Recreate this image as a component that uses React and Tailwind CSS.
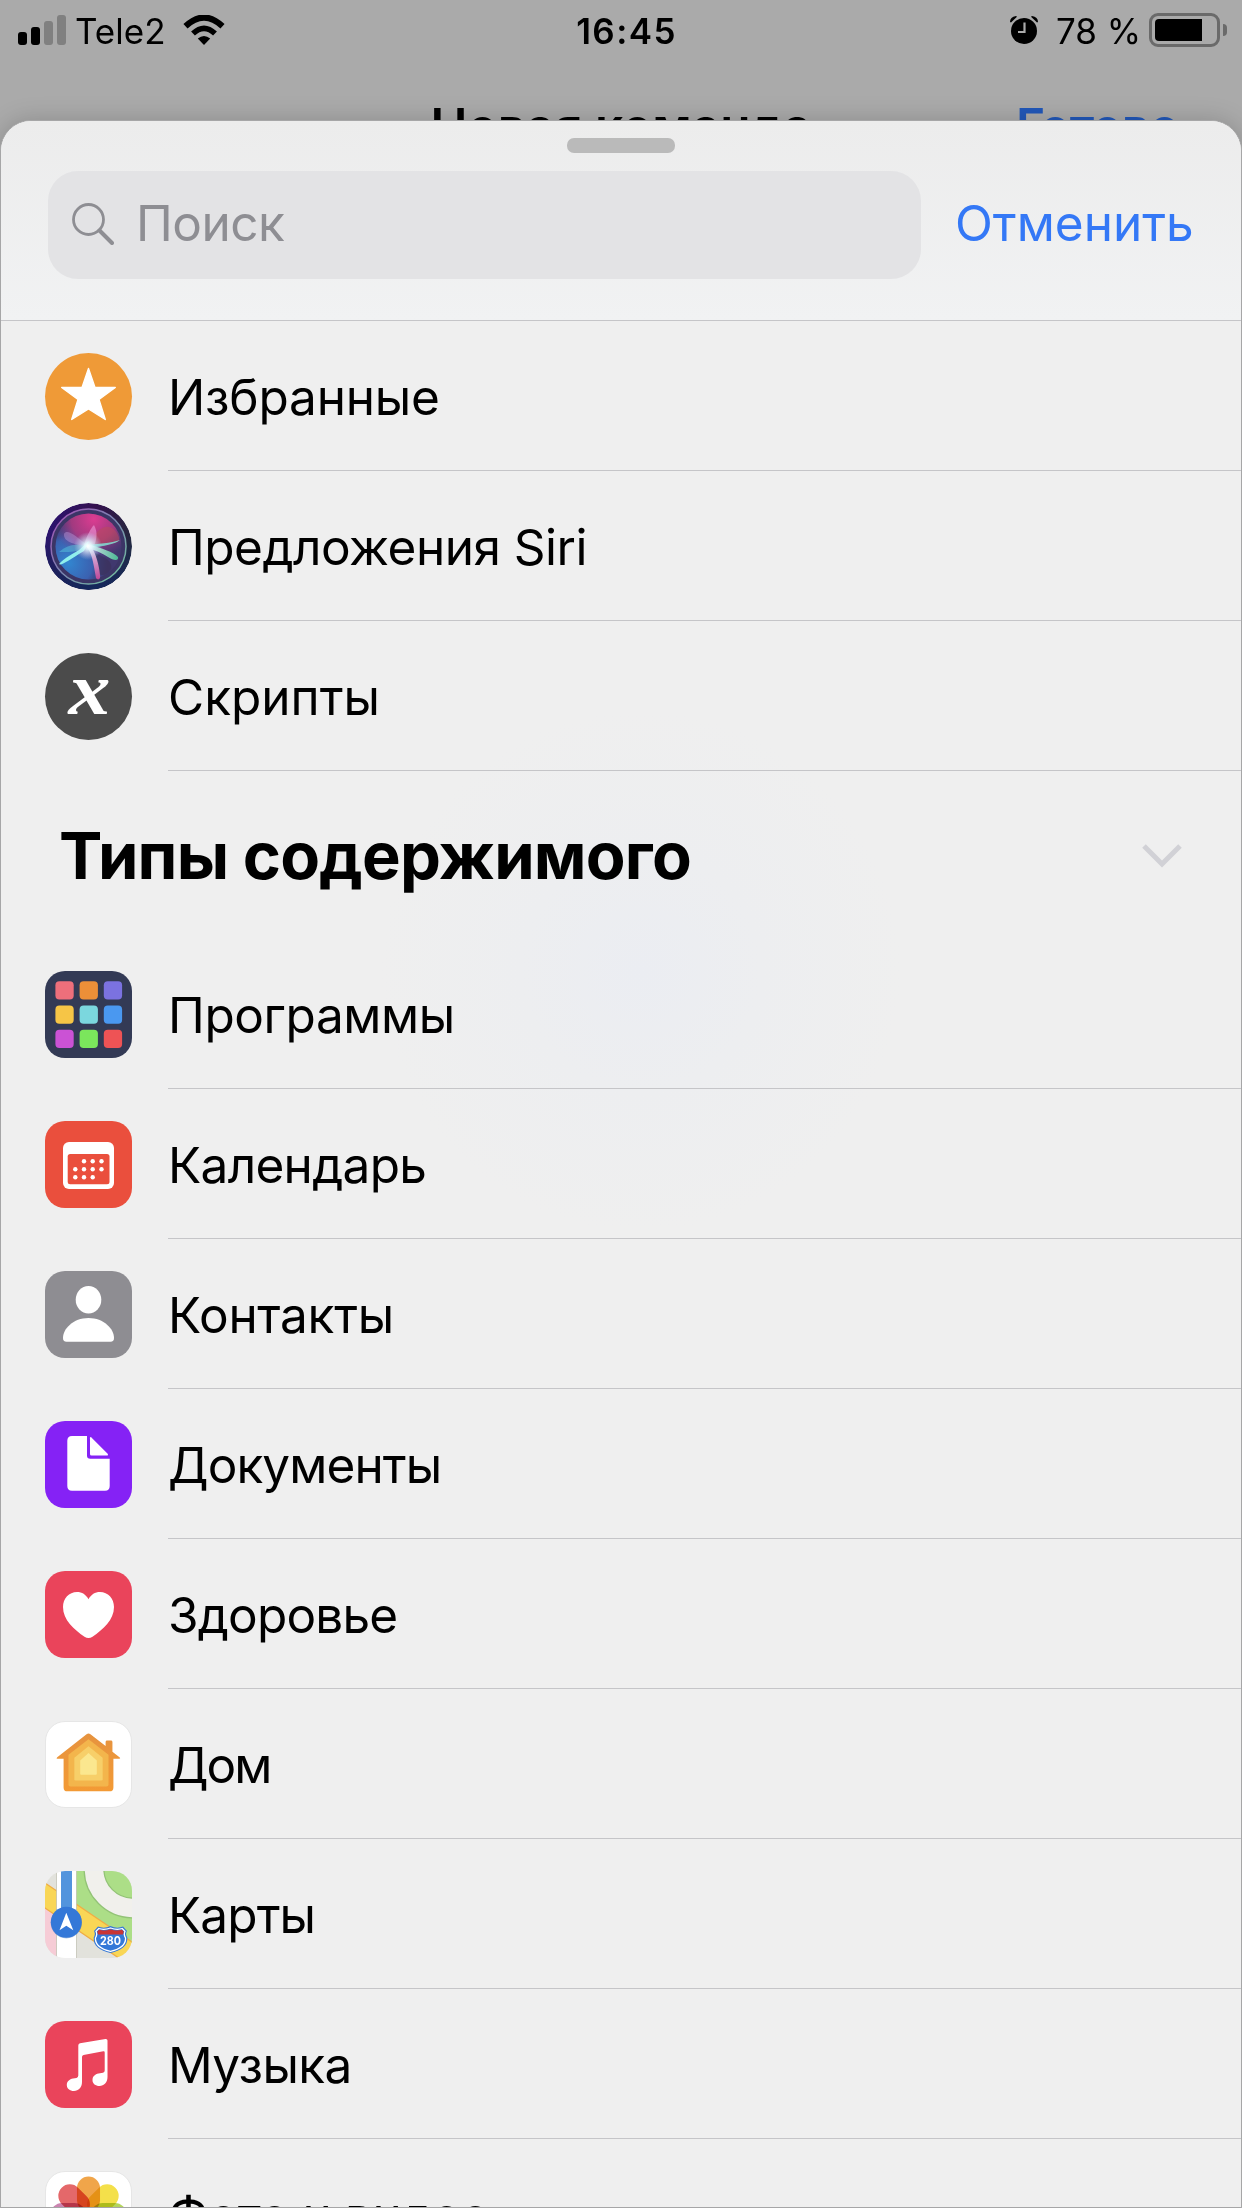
import React from "react";

const PETALS = [
    { angle: 0, color: "#f0a54a" },
    { angle: 45, color: "#f4e04a" },
    { angle: 90, color: "#b4d55c" },
    { angle: 135, color: "#6fc0a0" },
    { angle: 180, color: "#7fb4dd" },
    { angle: 225, color: "#9b96cc" },
    { angle: 270, color: "#cb84b0" },
    { angle: 315, color: "#e4686a" }
];

const APP_TILES = ["#ee6f7b", "#ec8f38", "#7b72e0", "#f6c546", "#7bd7de", "#4a98f0", "#cb52d5", "#7be65c", "#ee5355"];

const CALENDAR_DOTS = [
    [39, 40.3], [47.7, 40.3], [56.5, 40.3],
    [30.3, 48.3], [39, 48.3], [47.7, 48.3], [56.5, 48.3],
    [30.3, 56.3], [39, 56.3], [47.7, 56.3]
];

function Icon({ children, className = "" }) {
    return (
        <svg viewBox="0 0 87 87" className={`size-[87px] shrink-0 overflow-hidden ${className}`}>
            {children}
        </svg>
    );
}

function FavoritesIcon() {
    return (
        <Icon className="rounded-full bg-[#ef9a37]">
            <path
                d="M43.5 15.5 50 34.5H70.3L54 46.5 60.3 66.5 43.5 56 26.7 66.5 33 46.5 16.7 34.5H37Z"
                fill="#fff"
                stroke="#fff"
                strokeWidth="1.4"
                strokeLinejoin="round"
            />
        </Icon>
    );
}

function SiriIcon() {
    return (
        <Icon className="rounded-full">
            <defs>
                <linearGradient id="siriRim" x1="0" y1="0.3" x2="1" y2="0.6">
                    <stop offset="0" stopColor="#2a1470" />
                    <stop offset="0.45" stopColor="#35104f" />
                    <stop offset="1" stopColor="#242c3c" />
                </linearGradient>
                <linearGradient id="siriRimLow" x1="0" y1="0" x2="0" y2="1">
                    <stop offset="0.35" stopColor="#14285c" stopOpacity="0" />
                    <stop offset="1" stopColor="#14285c" />
                </linearGradient>
                <linearGradient id="siriRing" x1="0" y1="0" x2="1" y2="1">
                    <stop offset="0" stopColor="#a44cb4" />
                    <stop offset="0.5" stopColor="#7a86b0" />
                    <stop offset="1" stopColor="#6fc79a" />
                </linearGradient>
                <radialGradient id="siriPink" cx="0.58" cy="0.08" r="0.62">
                    <stop offset="0" stopColor="#dd3c92" />
                    <stop offset="0.55" stopColor="#b33a82" stopOpacity="0.85" />
                    <stop offset="1" stopColor="#7a3a90" stopOpacity="0" />
                </radialGradient>
                <radialGradient id="siriBlue" cx="0.2" cy="0.75" r="0.6">
                    <stop offset="0" stopColor="#3286d0" />
                    <stop offset="0.6" stopColor="#3a66b8" stopOpacity="0.9" />
                    <stop offset="1" stopColor="#34468c" stopOpacity="0" />
                </radialGradient>
                <radialGradient id="siriGlow">
                    <stop offset="0" stopColor="#fff" />
                    <stop offset="0.25" stopColor="#e6fbff" stopOpacity="0.9" />
                    <stop offset="1" stopColor="#b6d8f6" stopOpacity="0" />
                </radialGradient>
                <linearGradient id="siriTeal" x1="0" y1="0" x2="1" y2="0">
                    <stop offset="0" stopColor="#eafffb" />
                    <stop offset="1" stopColor="#4fcf9c" />
                </linearGradient>
                <linearGradient id="siriStem" x1="0" y1="0" x2="0" y2="1">
                    <stop offset="0" stopColor="#fbe9fb" />
                    <stop offset="1" stopColor="#d6489c" />
                </linearGradient>
            </defs>
            <circle cx="43.5" cy="43.5" r="43.5" fill="url(#siriRim)" />
            <circle cx="43.5" cy="43.5" r="43.5" fill="url(#siriRimLow)" />
            <circle cx="43.5" cy="43.5" r="37.5" fill="#3b3566" stroke="url(#siriRing)" strokeWidth="1.5" />
            <circle cx="43.5" cy="43.5" r="33" fill="#40386e" />
            <circle cx="43.5" cy="43.5" r="33" fill="url(#siriBlue)" />
            <circle cx="43.5" cy="43.5" r="33" fill="url(#siriPink)" />
            <path d="M44 43C52 22 66 18 73 32 77 40 72 41 44 43Z" fill="#b94a5c" opacity="0.55" />
            <path d="M50 50C60 54 68 58 66 66 62 72 56 74 54 70Z" fill="#3a3158" opacity="0.6" />
            <path d="M43 43C32 34 22 25 19 31 18 38 28 42 43 43Z" fill="#c2a2e0" opacity="0.4" />
            <path d="M14 49C24 40 34 41 43 43 34 50 24 49 14 49Z" fill="#58c4dc" opacity="0.5" />
            <path d="M39 42C42 32 46 25 49 22 53 29 52 37 48 45Z" fill="#f2a2e0" opacity="0.55" />
            <path d="M40 42C53 41 66 40 75 37 70 41 60 43 44 45Z" fill="#7eeadb" opacity="0.8" />
            <path d="M42 41C56 45 69 49 73 54 74 58 69 58 63 54 57 50 50 47 42 45Z" fill="url(#siriTeal)" opacity="0.85" />
            <path d="M44 38 34 47C26 52 21 54 14 61 16 63 24 57 39 48Z" fill="#8ff0ec" />
            <path d="M41 43C47 50 48 58 51 75 53 78 56 76 55 72 54 62 51 51 46 43Z" fill="url(#siriStem)" opacity="0.85" />
            <circle cx="43" cy="43" r="14" fill="url(#siriGlow)" />
        </Icon>
    );
}

function ScriptsIcon() {
    return (
        <Icon className="rounded-full bg-[#4b4b4b]">
            <text
                x="44.5"
                y="60.5"
                textAnchor="middle"
                textLength="42"
                lengthAdjust="spacingAndGlyphs"
                className="fill-white font-['Liberation_Serif',serif] text-[74px] font-bold italic">
                x
            </text>
        </Icon>
    );
}

function AppsIcon() {
    return (
        <Icon className="rounded-[20px] bg-[#333a55]">
            {APP_TILES.map((color, index) => (
                <rect
                    key={color}
                    x={10.4 + (index % 3) * 24.2}
                    y={10.3 + Math.floor(index / 3) * 24.2}
                    width="18.3"
                    height="18.3"
                    rx="4"
                    fill={color}
                />
            ))}
        </Icon>
    );
}

function CalendarIcon() {
    return (
        <Icon className="rounded-[20px] bg-[#ea4f3d]">
            <rect x="18" y="21" width="51" height="47" rx="6" fill="#fff" />
            <rect x="22.7" y="33" width="41.8" height="30.3" rx="2.5" fill="#ea4f3d" />
            {CALENDAR_DOTS.map(([x, y]) => (
                <circle key={`${x}-${y}`} cx={x} cy={y} r="2.2" fill="#fff" />
            ))}
        </Icon>
    );
}

function ContactsIcon() {
    return (
        <Icon className="rounded-[20px] bg-[#8e8d92]">
            <ellipse cx="43.5" cy="28.8" rx="12.8" ry="13.8" fill="#fff" />
            <path d="M18 67C18 58 28 47 43.5 47S69 58 69 67Q69 70.8 65.5 70.8H21.5Q18 70.8 18 67Z" fill="#fff" />
        </Icon>
    );
}

function DocumentsIcon() {
    return (
        <Icon className="rounded-[20px] bg-[#8522f5]">
            <path
                d="M27 15H42V34.5Q42 37.7 45.2 37.7H64.7V65Q64.7 69.7 60 69.7H27Q22.3 69.7 22.3 65V19.7Q22.3 15 27 15Z"
                fill="#fff"
            />
            <path d="M45 17.2Q45 15.4 46.4 16.6L62.4 32.6Q64 34.6 61.5 34.6H46.5Q45 34.6 45 33Z" fill="#fff" />
        </Icon>
    );
}

function HealthIcon() {
    return (
        <Icon className="rounded-[20px] bg-[#ea445b]">
            <path
                d="M43.5 28.3C41 23.5 37 21 32 21 24 21 18 27.5 18 36 18 49 29 58.5 39.5 65.7Q43.5 68.4 47.5 65.7C58 58.5 69 49 69 36 69 27.5 63 21 55 21 50 21 46 23.5 43.5 28.3Z"
                fill="#fff"
            />
        </Icon>
    );
}

function HomeIcon() {
    return (
        <Icon className="rounded-[20px] border border-[#e6e6e6] bg-white">
            <defs>
                <linearGradient id="houseOuter" x1="0" y1="0" x2="0" y2="1">
                    <stop offset="0" stopColor="#e6933f" />
                    <stop offset="1" stopColor="#f39a35" />
                </linearGradient>
            </defs>
            <path
                d="M41.5 12.5Q43.5 10.8 45.5 12.5L61 24.5V20.5Q61 19 62.5 19H66.5Q68 19 68 20.5V30.5L75.5 36.3Q76.5 37.7 75 37.7H69V67Q69 71 65 71H22Q18 71 18 67V37.7H12Q10 37.7 11.5 36Z"
                fill="url(#houseOuter)"
            />
            <path d="M43.5 17.7 64 33.5V64Q64 66 62 66H25Q23 66 23 64V33.5Z" fill="#f3b54c" />
            <path d="M43.5 24.7 58 36.5V58.5Q58 60 56.5 60H30.5Q29 60 29 58.5V36.5Z" fill="#f7cf69" />
            <path d="M43.5 31.7 52 39.5V53Q52 54 51 54H36Q35 54 35 53V39.5Z" fill="#fbe78f" />
        </Icon>
    );
}

function MapsIcon() {
    return (
        <Icon className="rounded-[20px] bg-[#e2e2dc]">
            <path d="M31 0H87V72L31 34Z" fill="#acde87" />
            <circle cx="88" cy="-2" r="39" fill="none" stroke="#93c377" strokeWidth="21" />
            <circle cx="88" cy="-2" r="39" fill="none" stroke="#f1f0ec" strokeWidth="18.5" />
            <path d="M0 36 12 44V87H0Z" fill="#f6ccd6" />
            <path d="M-3 10 90 73V98L-3 35Z" fill="#f9d656" stroke="#f0ad45" strokeWidth="1.3" />
            <path d="M11.7 0V87M31.3 0V87" stroke="#c7c7bb" strokeWidth="1" />
            <rect x="12" width="19" height="87" fill="#fff" />
            <rect x="16" width="11" height="40" fill="#5294dd" />
            <circle cx="21.3" cy="51.8" r="15.6" fill="#275fae" opacity="0.35" />
            <circle cx="21.3" cy="51.3" r="15.5" fill="#3478d8" />
            <path d="M21.3 41.7 28.3 59.3 21.3 54.7 14.5 59.3Z" fill="#fff" />
            <path
                d="M53 55.5Q59 58 65.5 55 72 58 78 55.5L82 60Q80 63 82.3 66.5C83 75 76 79.5 65.5 82 55 79.5 48 75 48.7 66.5 51 63 49 60 49 60Z"
                fill="#3478d8"
            />
            <path
                d="M53.8 57.5Q59 59.3 65.5 57 72 59.3 77.2 57.5L80 60.3Q78.3 63.5 80.6 67C80.8 74 75 78.2 65.5 80.3 56 78.2 50.2 74 50.4 67 52.7 63.5 51 60.3 51 60.3Z"
                fill="#3478d8"
                stroke="#fff"
                strokeWidth="1.3"
            />
            <path d="M54 58.7Q60 60.5 65.5 58.2 71 60.5 77 58.7L78.7 60.5 78 63.4H53L52.3 60.5Z" fill="#c93535" />
            <text
                x="65.5"
                y="74"
                textAnchor="middle"
                textLength="21"
                lengthAdjust="spacingAndGlyphs"
                className="fill-white font-[Inter,sans-serif] text-[11.5px] font-bold">
                280
            </text>
        </Icon>
    );
}

function MusicIcon() {
    return (
        <Icon className="rounded-[20px] bg-[#ea445b]">
            <path
                d="M33.3 24.5Q33.3 22.8 35 22.3L60.5 17.9Q62.5 17.7 62.5 19.5V56C62.5 61.5 59 65 54.5 65 50.5 65 47.5 62.5 47.5 59.2 47.5 55.5 50 53.3 53.5 52.6L58 51.7Q59.7 51.2 59.7 49.5V31.5Q59.7 30 58.3 30.3L38.5 34.1Q37 34.5 37 36V61C37 66.5 33.5 70 29 70 24.8 70 21.8 67.5 21.8 64 21.8 60.5 24.5 58.3 28 57.6L31.5 56.9Q33.3 56.4 33.3 54.5Z"
                fill="#fff"
            />
        </Icon>
    );
}

function PhotosIcon() {
    return (
        <Icon className="rounded-[20px] border border-[#e6e6e6] bg-white">
            <g className="isolate">
                {PETALS.map((petal) => (
                    <rect
                        key={petal.angle}
                        x="31.7"
                        y="4.7"
                        width="23.6"
                        height="36"
                        rx="11.8"
                        fill={petal.color}
                        transform={`rotate(${petal.angle} 43.5 43.5)`}
                        className="mix-blend-multiply"
                    />
                ))}
            </g>
        </Icon>
    );
}

const GENERAL = [
    { name: "Избранные", icon: FavoritesIcon, tracking: "tracking-[-0.2px]" },
    { name: "Предложения Siri", icon: SiriIcon, tracking: "tracking-[-0.5px]" },
    { name: "Скрипты", icon: ScriptsIcon, tracking: "tracking-normal" }
];

const CONTENT_TYPES = [
    { name: "Программы", icon: AppsIcon, tracking: "tracking-[-0.4px]" },
    { name: "Календарь", icon: CalendarIcon, tracking: "tracking-[-0.7px]" },
    { name: "Контакты", icon: ContactsIcon, tracking: "tracking-[-0.3px]" },
    { name: "Документы", icon: DocumentsIcon, tracking: "tracking-[-0.9px]" },
    { name: "Здоровье", icon: HealthIcon, tracking: "tracking-[-0.8px]" },
    { name: "Дом", icon: HomeIcon, tracking: "tracking-[-2px]" },
    { name: "Карты", icon: MapsIcon, tracking: "tracking-[-0.9px]" },
    { name: "Музыка", icon: MusicIcon, tracking: "tracking-[-0.6px]" },
    { name: "Фото и видео", icon: PhotosIcon, tracking: "tracking-[-0.4px]" }
];

function Row({ name, icon: RowIcon, tracking }) {
    return (
        <li className="flex h-[150px] shrink-0 pl-11">
            <div className="flex w-[123px] shrink-0 pt-8">
                <RowIcon />
            </div>
            <div className="flex flex-1 items-center border-b border-[#c5c5c8] pt-[3px]">
                <span className={`text-[49.5px] leading-[60px] whitespace-nowrap ${tracking}`}>{name}</span>
            </div>
        </li>
    );
}

function StatusBar() {
    return (
        <div className="flex h-[60px] shrink-0 items-center justify-between pr-[15px] pl-[18px]">
            <div className="flex w-[500px] items-center">
                <div className="flex h-[30px] items-end gap-1">
                    <span className="h-[13px] w-[9px] rounded-[3px] bg-black" />
                    <span className="h-[18px] w-[9px] rounded-[3px] bg-black" />
                    <span className="h-6 w-[9px] rounded-[3px] bg-[#808080]" />
                    <span className="h-[30px] w-[9px] rounded-[3px] bg-[#808080]" />
                </div>
                <span className="ml-[9px] w-[108px] pt-0.5 text-[35px] leading-none">Tele2</span>
                <svg viewBox="0 0 42 30" className="h-[30px] w-[42px]">
                    <path d="M2.5 11.3Q21-6.2 39.5 11.3" fill="none" stroke="#000" strokeWidth="6" />
                    <path d="M10 18.6Q21 8 32 18.6" fill="none" stroke="#000" strokeWidth="5.5" />
                    <path d="M14.8 23.5Q21 18.5 27.2 23.5L21 30Z" fill="#000" />
                </svg>
            </div>
            <span className="pt-0.5 pl-[8px] text-[35px] leading-none font-semibold tracking-[1.4px]">16:45</span>
            <div className="flex w-[500px] items-center justify-end">
                <svg viewBox="0 0 28 28" className="size-7">
                    <circle cx="14" cy="15" r="13" fill="#000" />
                    <path d="M0 6Q0 1 6 0L7 .8 1 6.5ZM28 6Q28 1 22 0L21 .8 27 6.5Z" fill="#000" />
                    <path d="M14.5 6.5V16H8" fill="none" stroke="#aaa" strokeWidth="2.2" />
                </svg>
                <span className="ml-[18px] w-[93px] pt-0.5 text-[35px] leading-none whitespace-nowrap">78 %</span>
                <div className="flex h-[34px] w-[71px] rounded-[9px] border-[3px] border-[#6a6a6a] p-[3px]">
                    <span className="w-[47px] rounded-l-[4px] bg-black" />
                </div>
                <span className="ml-[3px] h-3 w-1 rounded-r-full bg-[#6a6a6a]" />
            </div>
        </div>
    );
}

export default function App() {
    return (
        <div className="flex h-[2208px] w-[1242px] flex-col overflow-hidden bg-[#aaaaaa] font-[Inter,sans-serif] text-black">
            <div className="flex h-[120px] shrink-0 flex-col overflow-hidden">
                <StatusBar />
                <div className="flex shrink-0 justify-between pt-[36px] text-[49.5px] leading-[60px] font-semibold">
                    <span className="w-[226px]" />
                    <span>Новая команда</span>
                    <span className="w-[226px] tracking-[-0.7px] text-[#2157b8]">Готово</span>
                </div>
            </div>

            <div className="relative flex h-[2088px] shrink-0 flex-col overflow-hidden rounded-t-[31px] border border-[#a6a6a7] bg-[#efefef] shadow-[0_0_24px_rgba(0,0,0,0.18)]">
                <div className="flex h-[200px] shrink-0 flex-col border-b border-[#c5c5c8] bg-linear-to-b from-[#ececec] to-[#f1f2f3]">
                    <div className="mx-auto mt-[17px] h-[15px] w-[108px] rounded-[7px] bg-[#bababa]" />
                    <div className="mt-[18px] flex h-[108px] items-center pl-[47px]">
                        <div className="flex h-[108px] w-[873px] items-center rounded-[30px] bg-[#e3e3e5] pl-6">
                            <svg viewBox="0 0 42 42" className="mt-[-2px] size-[42px]">
                                <circle cx="16.5" cy="16.5" r="15" fill="none" stroke="#8e8e93" strokeWidth="2.8" />
                                <path d="M27.5 27.5 40 40" stroke="#8e8e93" strokeWidth="4" strokeLinecap="round" />
                            </svg>
                            <span className="ml-[22px] pb-[5px] text-[49.5px] leading-[60px] tracking-[-0.5px] text-[#8e8e93]">
                                Поиск
                            </span>
                        </div>
                        <button className="ml-[34px] pb-[5px] text-[49.5px] leading-[60px] text-[#3478f6]">Отменить</button>
                    </div>
                </div>

                <div className="flex flex-1 flex-col overflow-hidden bg-[radial-gradient(circle_at_640px_650px,#ebedf2_0,#edeef0_120px,#efefef_260px)]">
                    <ul className="flex shrink-0 flex-col">
                        {GENERAL.map((item) => (
                            <Row key={item.name} {...item} />
                        ))}
                    </ul>
                    <div className="flex h-[168px] shrink-0 items-center justify-between pr-[59px] pl-[58px]">
                        <h2 className="pt-[2px] text-[65px] leading-[78px] font-bold tracking-[-0.8px]">Типы содержимого</h2>
                        <svg viewBox="0 0 40 24" className="mt-[2px] h-6 w-10">
                            <path d="M2 2 20 20 38 2" fill="none" stroke="#d1d1d6" strokeWidth="5" />
                        </svg>
                    </div>
                    <ul className="flex shrink-0 flex-col">
                        {CONTENT_TYPES.map((item) => (
                            <Row key={item.name} {...item} />
                        ))}
                    </ul>
                </div>
            </div>
        </div>
    );
}
